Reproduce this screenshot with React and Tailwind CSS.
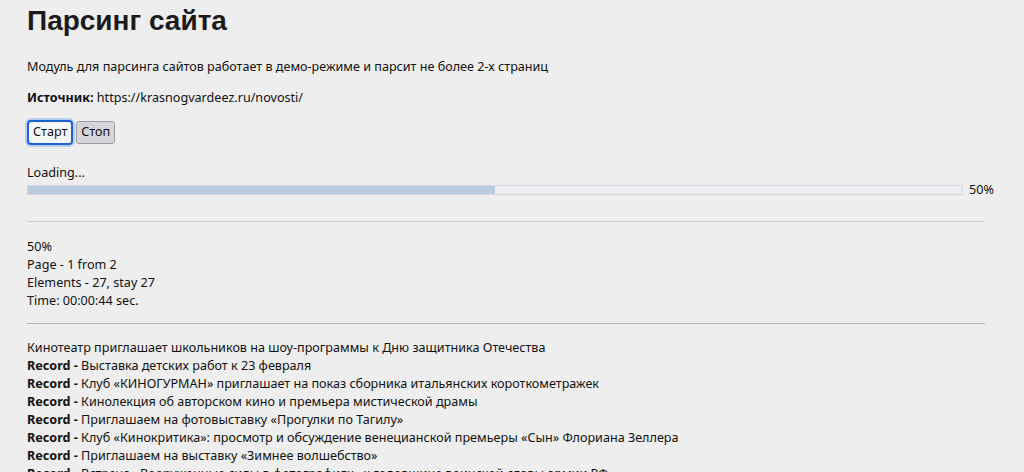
import React from "react";

const stats = ["50%", "Page - 1 from 2", "Elements - 27, stay 27", "Time: 00:00:44 sec."];

const records = [
  { title: "Кинотеатр приглашает школьников на шоу-программы к Дню защитника Отечества", plain: true },
  { title: "Выставка детских работ к 23 февраля" },
  { title: "Клуб «КИНОГУРМАН» приглашает на показ сборника итальянских короткометражек" },
  { title: "Кинолекция об авторском кино и премьера мистической драмы" },
  { title: "Приглашаем на фотовыставку «Прогулки по Тагилу»" },
  { title: "Клуб «Кинокритика»: просмотр и обсуждение венецианской премьеры «Сын» Флориана Зеллера" },
  { title: "Приглашаем на выставку «Зимнее волшебство»" },
  { title: "Встреча «Вооруженные силы в фотографиях» к годовщине воинской славы армии РФ" },
];

const App = () => {
  const percent = 50;

  return (
    <div className="min-h-screen bg-[#eeeeee] text-[#111] font-['Noto_Sans',sans-serif] overflow-hidden">
      <div className="ml-[27px] w-[958px] pt-[4px]">
        <h1 className="text-[28px] leading-[34px] font-bold font-['Liberation_Sans',Arial,sans-serif] text-[#1b1b1b]">
          Парсинг сайта
        </h1>

        <p className="mt-[20px] text-[12.6px] leading-[18px]">
          Модуль для парсинга сайтов работает в демо-режиме и парсит не более 2-х страниц
        </p>

        <p className="mt-[13px] text-[12.6px] leading-[18px]">
          <b>Источник:</b> https://krasnogvardeez.ru/novosti/
        </p>

        {/* Buttons */}
        <div className="mt-[13px] flex items-center gap-[3px] text-[12.6px]">
          <button className="h-[25px] px-[4px] rounded-[4px] border-2 border-[#1a62d6] bg-[#f6f7f9] ring-2 ring-[#b9cff2] leading-none">
            Старт
          </button>
          <button className="h-[23px] px-[4px] rounded-[3px] border border-[#9d9da3] bg-[#d6d6da] leading-none">
            Стоп
          </button>
        </div>

        {/* Progress */}
        <div className="mt-[19px] text-[12.6px] leading-[17px]">Loading...</div>
        <div className="flex items-center gap-[6px] text-[12.6px] leading-[18px]">
          <div className="w-[936px] h-[10px] shrink-0 border border-[#d3d8de] bg-[#eaecef]">
            <div className="h-full bg-[#b8cbe0]" style={{ width: `${percent}%` }} />
          </div>
          <span className="whitespace-nowrap">{percent}%</span>
        </div>

        <hr className="mt-[22px] border-t border-[#cfcfcf]" />

        <div className="mt-[16px] text-[12.6px] leading-[18px]">
          {stats.map((s, i) => (
            <div key={i}>{s}</div>
          ))}
        </div>

        <hr className="mt-[13px] border-t border-[#b5b5b5]" />

        <div className="mt-[15px] text-[12.6px] leading-[18px]">
          {records.map((r, i) => (
            <div key={i} className="whitespace-nowrap">
              {!r.plain && <b>Record - </b>}
              {r.title}
            </div>
          ))}
        </div>
      </div>
    </div>
  );
};

export default App;
